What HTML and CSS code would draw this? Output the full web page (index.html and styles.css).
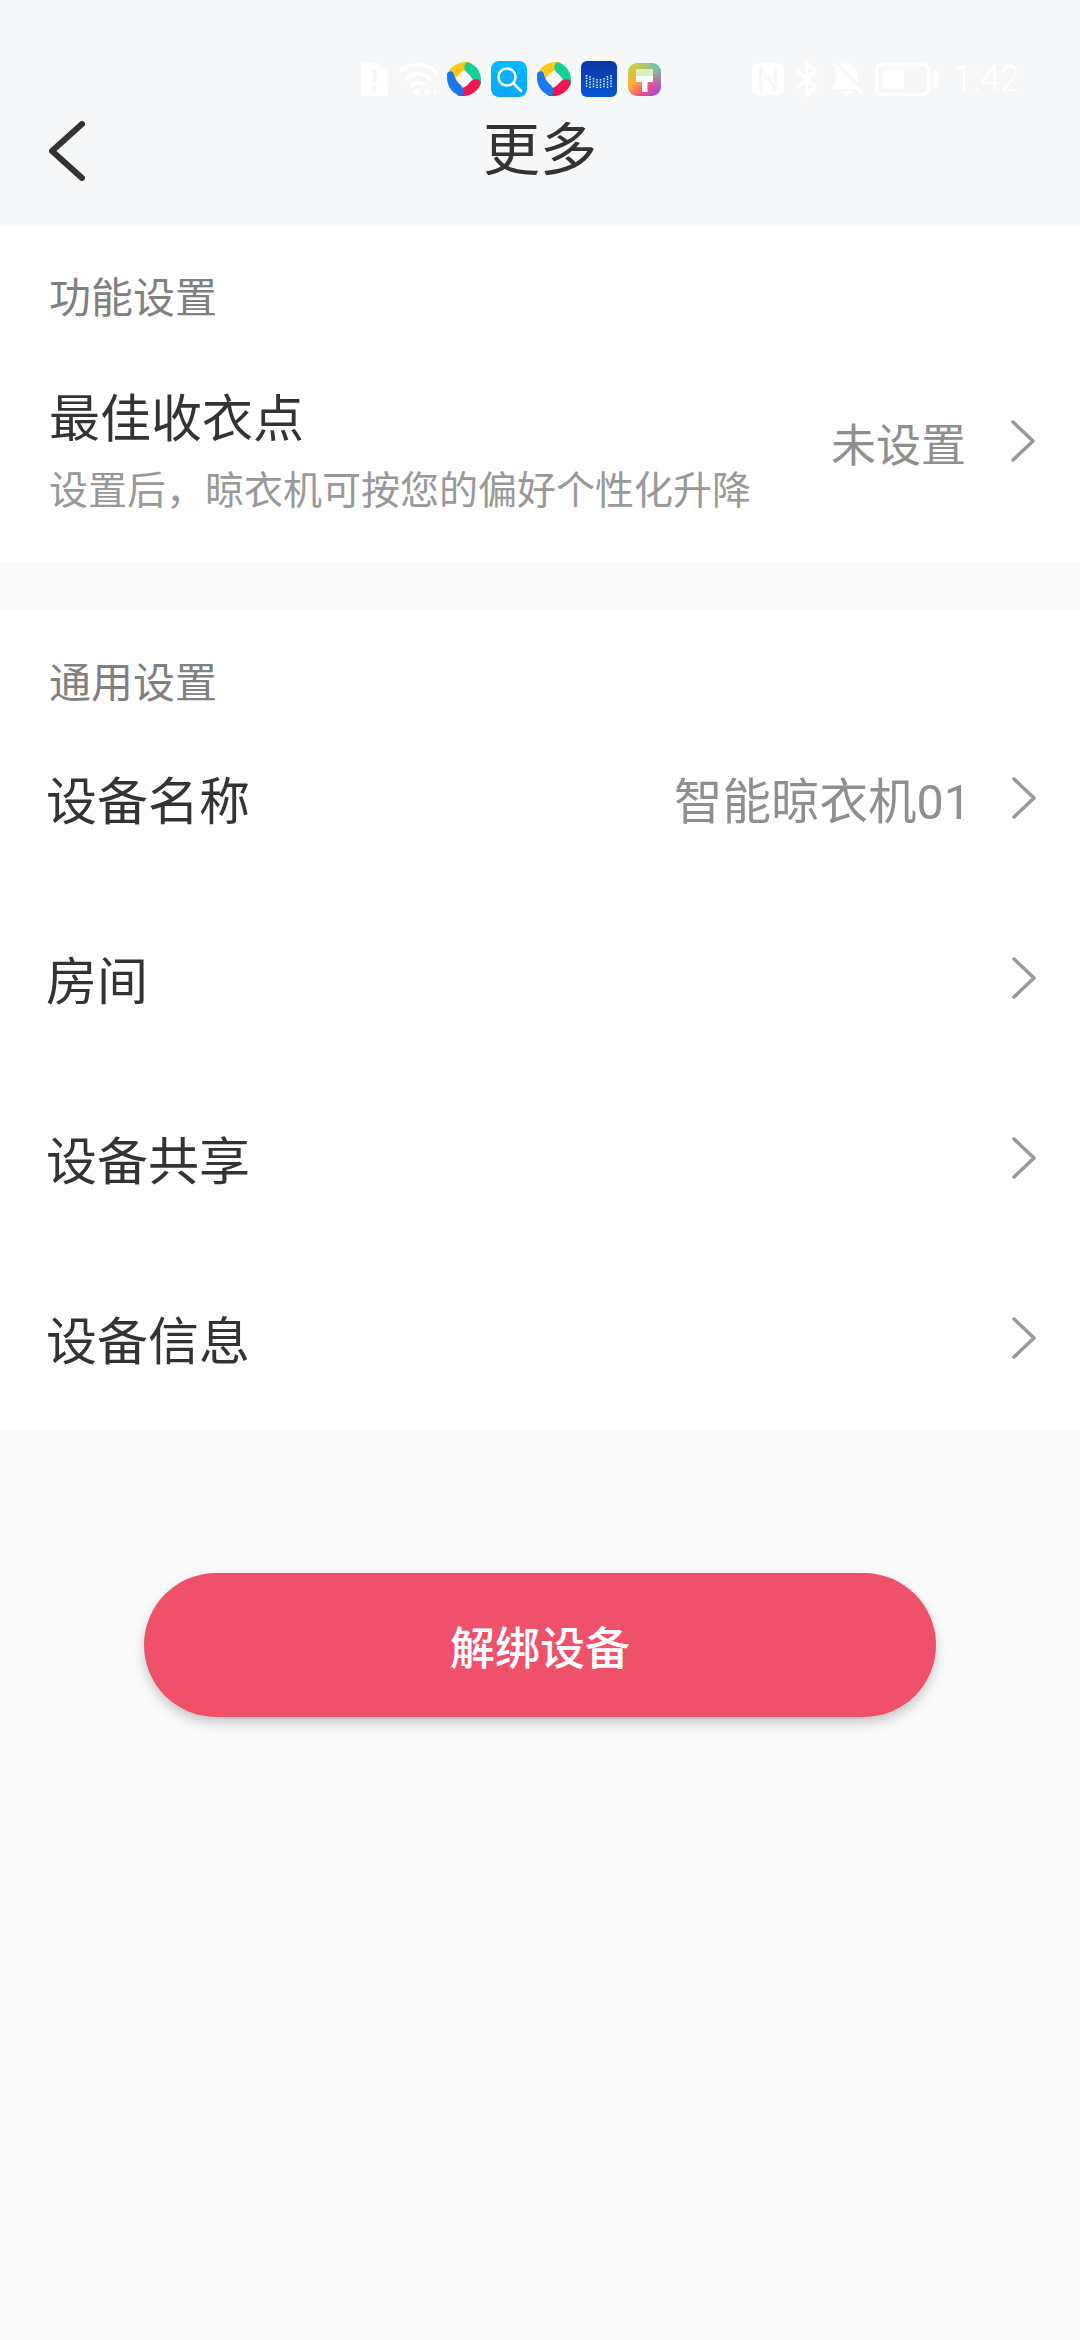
FILE: index.html
```html
<!DOCTYPE html>
<html lang="zh-CN">
<head>
<meta charset="utf-8">
<title>更多</title>
<link rel="stylesheet" href="styles.css">
</head>
<body>
<header class="top">
  <div class="status">
    <div class="status-left">
      <svg class="i-sim" viewBox="0 0 27 33"><path fill="#fff" fill-rule="evenodd" d="M4 0H18L27 8V29a4 4 0 0 1-4 4H4a4 4 0 0 1-4-4V4a4 4 0 0 1 4-4ZM11.500 7V19H15.500V7ZM13.500 22a3 3 0 1 0 0 6a3 3 0 0 0 0-6Z"/></svg>
      <svg class="i-wifi" viewBox="0 0 42 33"><g fill="none" stroke="#fff" stroke-width="3.500" stroke-linecap="round"><path d="M2 9C12-1 28-1 38 9"/><path d="M8 16C15 9 25 9 32 16"/><path d="M14 22C17.500 19 22.500 19 26 22"/></g><circle cx="19" cy="29" r="3.500" fill="#fff"/><path fill="#fff" d="M31 33V31H26L31 24V33ZM36 33V24L41 28.500Z"/></svg>
      <svg class="i-app" viewBox="0 0 35 35"><use href="#pin"/></svg>
      <svg class="i-app" viewBox="0 0 36 36"><defs><linearGradient id="sb" x1="0" y1="0" x2="0" y2="1"><stop offset="0" stop-color="#00bcff"/><stop offset="1" stop-color="#0aa6f8"/></linearGradient></defs><rect width="36" height="36" rx="8" fill="url(#sb)"/><circle cx="16" cy="16" r="8.500" fill="none" stroke="#fff" stroke-width="2.500"/><path d="M22.500 22.500L30 30" stroke="#fff" stroke-width="2.500" stroke-linecap="round"/></svg>
      <svg class="i-app" viewBox="0 0 35 35"><use href="#pin"/></svg>
      <svg class="i-app" viewBox="0 0 36 36"><defs><linearGradient id="dk" x1="0" y1="0" x2="0" y2="1"><stop offset="0" stop-color="#0a36a4"/><stop offset="1" stop-color="#0658d4"/></linearGradient></defs><rect width="36" height="36" rx="6" fill="url(#dk)"/><path d="M5.500 14V27M9 15V27M12.500 17V27M16 18V27M19.500 18V27M23 17V27M26.500 15V27M30 14V27" stroke="#e4eeff" stroke-width="1.500" stroke-dasharray="1.500 1.100"/></svg>
      <svg class="i-app i-brush" viewBox="0 0 33 33"><defs><linearGradient id="br" x1="0" y1="0" x2="1" y2="1"><stop offset="0" stop-color="#a9e04e"/><stop offset=".38" stop-color="#ffad32"/><stop offset=".68" stop-color="#f2468c"/><stop offset="1" stop-color="#7458f5"/></linearGradient><radialGradient id="bc" cx="1" cy="0" r=".8"><stop offset="0" stop-color="#45d8c8"/><stop offset="1" stop-color="#45d8c8" stop-opacity="0"/></radialGradient></defs><rect width="33" height="33" rx="9" fill="url(#br)"/><rect width="33" height="33" rx="9" fill="url(#bc)"/><path fill="#d6f0c4" d="M8 6H25V13H8Z"/><path fill="#fff" d="M8 13H25V19H19.500V29H14V19H8Z"/></svg>
    </div>
    <div class="status-right">
      <svg class="i-nfc" viewBox="0 0 32 32"><path fill="#fff" fill-rule="evenodd" d="M6 0H26a6 6 0 0 1 6 6V26a6 6 0 0 1-6 6H6a6 6 0 0 1-6-6V6a6 6 0 0 1 6-6ZM8.500 3C6.500 11 6.500 21 8.500 29L10 29V11L21 25V29H23.500C25.500 21 25.500 11 23.500 3H22V21L11 7V3Z"/></svg>
      <svg class="i-bt" viewBox="0 0 22 36"><path fill="none" stroke="#fff" stroke-width="3.200" stroke-linecap="round" stroke-linejoin="round" d="M2 10L20 26L11 34V2L20 10L2 26"/></svg>
      <svg class="i-bell" viewBox="0 0 32 34"><path fill="#fff" d="M5 6L26 27H1V25.500L4 23L5.500 12ZM9 3C11 1.500 13.500 1 16 1C22 1 26 5 26.500 11L27.500 21ZM11 29H21C20 32 18 33.500 16 33.500C14 33.500 12 32 11 29Z"/><path stroke="#fff" stroke-width="3" stroke-linecap="round" d="M2 2L30 30"/></svg>
      <div class="battery"><span class="battery-body"><span class="battery-fill"></span></span><span class="battery-nub"></span></div>
      <span class="time">1:42</span>
    </div>
  </div>
  <nav class="nav">
    <svg class="back" viewBox="0 0 36 60"><path fill="none" stroke="#333" stroke-width="6" stroke-linecap="round" stroke-linejoin="round" d="M33 3L3 30L33 57"/></svg>
    <h1 class="title">更多</h1>
  </nav>
</header>

<section class="card card-feature">
  <h2 class="section-label">功能设置</h2>
  <div class="row row-tall">
    <div class="row-text">
      <div class="row-title">最佳收衣点</div>
      <div class="row-sub">设置后，晾衣机可按您的偏好个性化升降</div>
    </div>
    <span class="row-value value-small">未设置</span>
    <svg class="chev chev-tall" viewBox="0 0 24 42"><use href="#chev"/></svg>
  </div>
</section>

<section class="card card-general">
  <h2 class="section-label">通用设置</h2>
  <div class="row">
    <span class="row-title">设备名称</span>
    <span class="row-value">智能晾衣机01</span>
    <svg class="chev" viewBox="0 0 24 42"><use href="#chev"/></svg>
  </div>
  <div class="row">
    <span class="row-title">房间</span>
    <svg class="chev" viewBox="0 0 24 42"><use href="#chev"/></svg>
  </div>
  <div class="row">
    <span class="row-title">设备共享</span>
    <svg class="chev" viewBox="0 0 24 42"><use href="#chev"/></svg>
  </div>
  <div class="row">
    <span class="row-title">设备信息</span>
    <svg class="chev" viewBox="0 0 24 42"><use href="#chev"/></svg>
  </div>
</section>

<div class="action"><button class="unbind">解绑设备</button></div>

<svg class="defs" width="0" height="0" aria-hidden="true">
  <defs>
    <path id="chev" fill="none" stroke="#999" stroke-width="3.500" stroke-linecap="round" stroke-linejoin="round" d="M2 2L22 21L2 40"/>
    <path id="petal" d="M1.500 13C4 5 12 0 22 1C25.500 1.500 26 6 23 7.500C18 8.500 14.500 10.500 11.500 14.500C8 18.500 0.500 18 1.500 13Z"/>
    <g id="pin">
      <use href="#petal" fill="#fdc91c"/>
      <use href="#petal" fill="#14d093" transform="rotate(90 17.500 17.500)"/>
      <use href="#petal" fill="#f1154f" transform="rotate(180 17.500 17.500)"/>
      <use href="#petal" fill="#1a78ee" transform="rotate(270 17.500 17.500)"/>
    </g>
  </defs>
</svg>
</body>
</html>
```
FILE: styles.css
```css
* { box-sizing: border-box; }
html, body { margin: 0; padding: 0; }
body {
  width: 1080px;
  height: 2340px;
  overflow: hidden;
  background: #fafafa;
  font-family: "Roboto", "Noto Sans CJK SC", sans-serif;
  color: #333;
}
.defs { display: block; height: 0; }

.top { height: 225px; background: #f6f7f9; padding-top: 61px; }
.status { height: 36px; display: flex; justify-content: space-between; padding: 0 60px 0 361px; align-items: center; }
.status-left, .status-right { display: flex; align-items: center; }
.status svg { display: block; flex: none; }
.i-sim { width: 27px; height: 33px; margin-right: 10px; }
.i-wifi { width: 42px; height: 33px; margin-right: 6px; }
.i-app { width: 36px; height: 36px; margin-right: 9px; }
.i-brush { width: 33px; height: 33px; margin: 0 0 0 2px; }
.i-nfc { width: 32px; height: 32px; margin-right: 12px; }
.i-bt { width: 22px; height: 36px; margin-right: 13px; }
.i-bell { width: 32px; height: 34px; margin-right: 12px; }
.battery { display: flex; align-items: center; gap: 4px; margin-right: 15px; }
.battery-body { width: 55px; height: 33px; border: 3px solid #fff; border-radius: 7px; padding: 4px; display: block; }
.battery-fill { display: block; width: 22px; height: 100%; background: #fff; border-radius: 2px; }
.battery-nub { width: 4px; height: 18px; background: #fff; border-radius: 2px; }
.time { font-size: 36px; font-weight: 300; line-height: 36px; color: #fff; }

.nav { position: relative; height: 108px; padding-left: 49px; display: flex; align-items: center; }
.back { width: 36px; height: 60px; display: block; }
.title { position: absolute; left: 0; right: 0; top: 0; margin: 0; text-align: center; font-size: 57px; font-weight: 400; line-height: 108px; color: #333; }

.card { background: #fff; }
.card-feature { height: 337px; padding-top: 49px; }
.card-general { margin-top: 48px; height: 820px; padding-top: 49px; }
.section-label { margin: 0; padding-left: 49px; font-size: 42px; font-weight: 400; line-height: 50px; color: #808080; }

.row { height: 180px; display: flex; align-items: center; padding: 8px 44px 0 46px; }
.row-tall { height: auto; padding: 64px 45px 0 49px; }
.row-text { flex: 1; }
.row-title { flex: 1; font-size: 51px; line-height: 64px; color: #333; }
.row-sub { font-size: 39px; line-height: 52px; color: #999; margin-top: 13px; white-space: nowrap; }
.row-value { font-size: 48.500px; color: #8f8f8f; margin-right: 41px; line-height: 60px; }
.value-small { font-size: 45px; margin-right: 45px; margin-bottom: 12px; }
.chev { width: 24px; height: 42px; display: block; flex: none; margin-bottom: 10px; }
.chev-tall { margin-bottom: 24px; }

.action { padding-top: 143px; display: flex; justify-content: center; }
.unbind {
  width: 792px;
  height: 144px;
  border: 0;
  border-radius: 72px;
  background: #ef516b;
  color: #fff;
  font-family: inherit;
  font-size: 45px;
  font-weight: 500;
  box-shadow: 0 6px 12px rgba(0, 0, 0, .2);
}
```
